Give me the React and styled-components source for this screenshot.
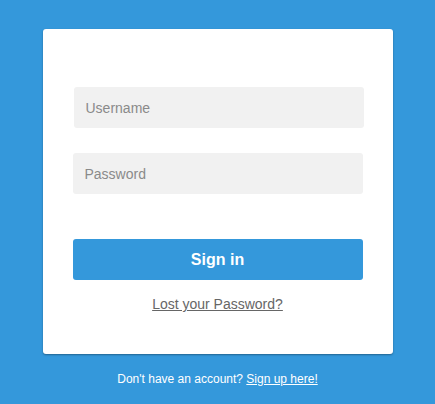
import React from "react";
import styled, { createGlobalStyle } from "styled-components";

const GlobalStyle = createGlobalStyle`
  html, body {
    margin: 0;
    padding: 0;
    background: #3498db;
    font-family: "Liberation Sans", Arial, sans-serif;
  }
`;

const Page = styled.div`
  min-height: 404px;
  padding-top: 29px;
  box-sizing: border-box;
`;

const Card = styled.form`
  width: 350px;
  margin: 0 auto;
  box-sizing: border-box;
  padding: 58px 30px 42px;
  background: #fff;
  border-radius: 3px;
  box-shadow: 0 1px 2px rgba(0, 0, 0, 0.35);
  display: flex;
  flex-direction: column;
`;

const Input = styled.input`
  display: block;
  width: 290px;
  height: 41px;
  box-sizing: border-box;
  margin: 0 0 0 ${({ $shift }) => $shift || 0}px;
  padding: 0 12px;
  border: none;
  border-radius: 3px;
  background: #f1f1f1;
  font-family: inherit;
  font-size: 14px;
  color: #333;
  outline: none;

  & + & {
    margin-top: 25px;
  }

  &::placeholder {
    color: #8a8a8a;
  }
`;

const Button = styled.button`
  margin-top: 45px;
  width: 290px;
  height: 41px;
  border: none;
  border-radius: 3px;
  background: #3498db;
  color: #fff;
  font-family: inherit;
  font-size: 16px;
  font-weight: 700;
  cursor: pointer;
`;

const LostLink = styled.a`
  align-self: center;
  margin-top: 16px;
  font-size: 14px;
  line-height: 16px;
  color: #666;
  text-decoration: underline;
`;

const Footer = styled.p`
  margin: 18px 0 0;
  text-align: center;
  font-size: 12px;
  line-height: 14px;
  color: #fff;

  a {
    color: #fff;
    text-decoration: underline;
  }
`;

export default function App() {
  return (
    <>
      <GlobalStyle />
      <Page>
        <Card onSubmit={(e) => e.preventDefault()}>
          <Input type="text" placeholder="Username" $shift={1} />
          <Input type="password" placeholder="Password" />
          <Button type="submit">Sign in</Button>
          <LostLink href="#">Lost your Password?</LostLink>
        </Card>
        <Footer>
          Don't have an account? <a href="#">Sign up here!</a>
        </Footer>
      </Page>
    </>
  );
}
